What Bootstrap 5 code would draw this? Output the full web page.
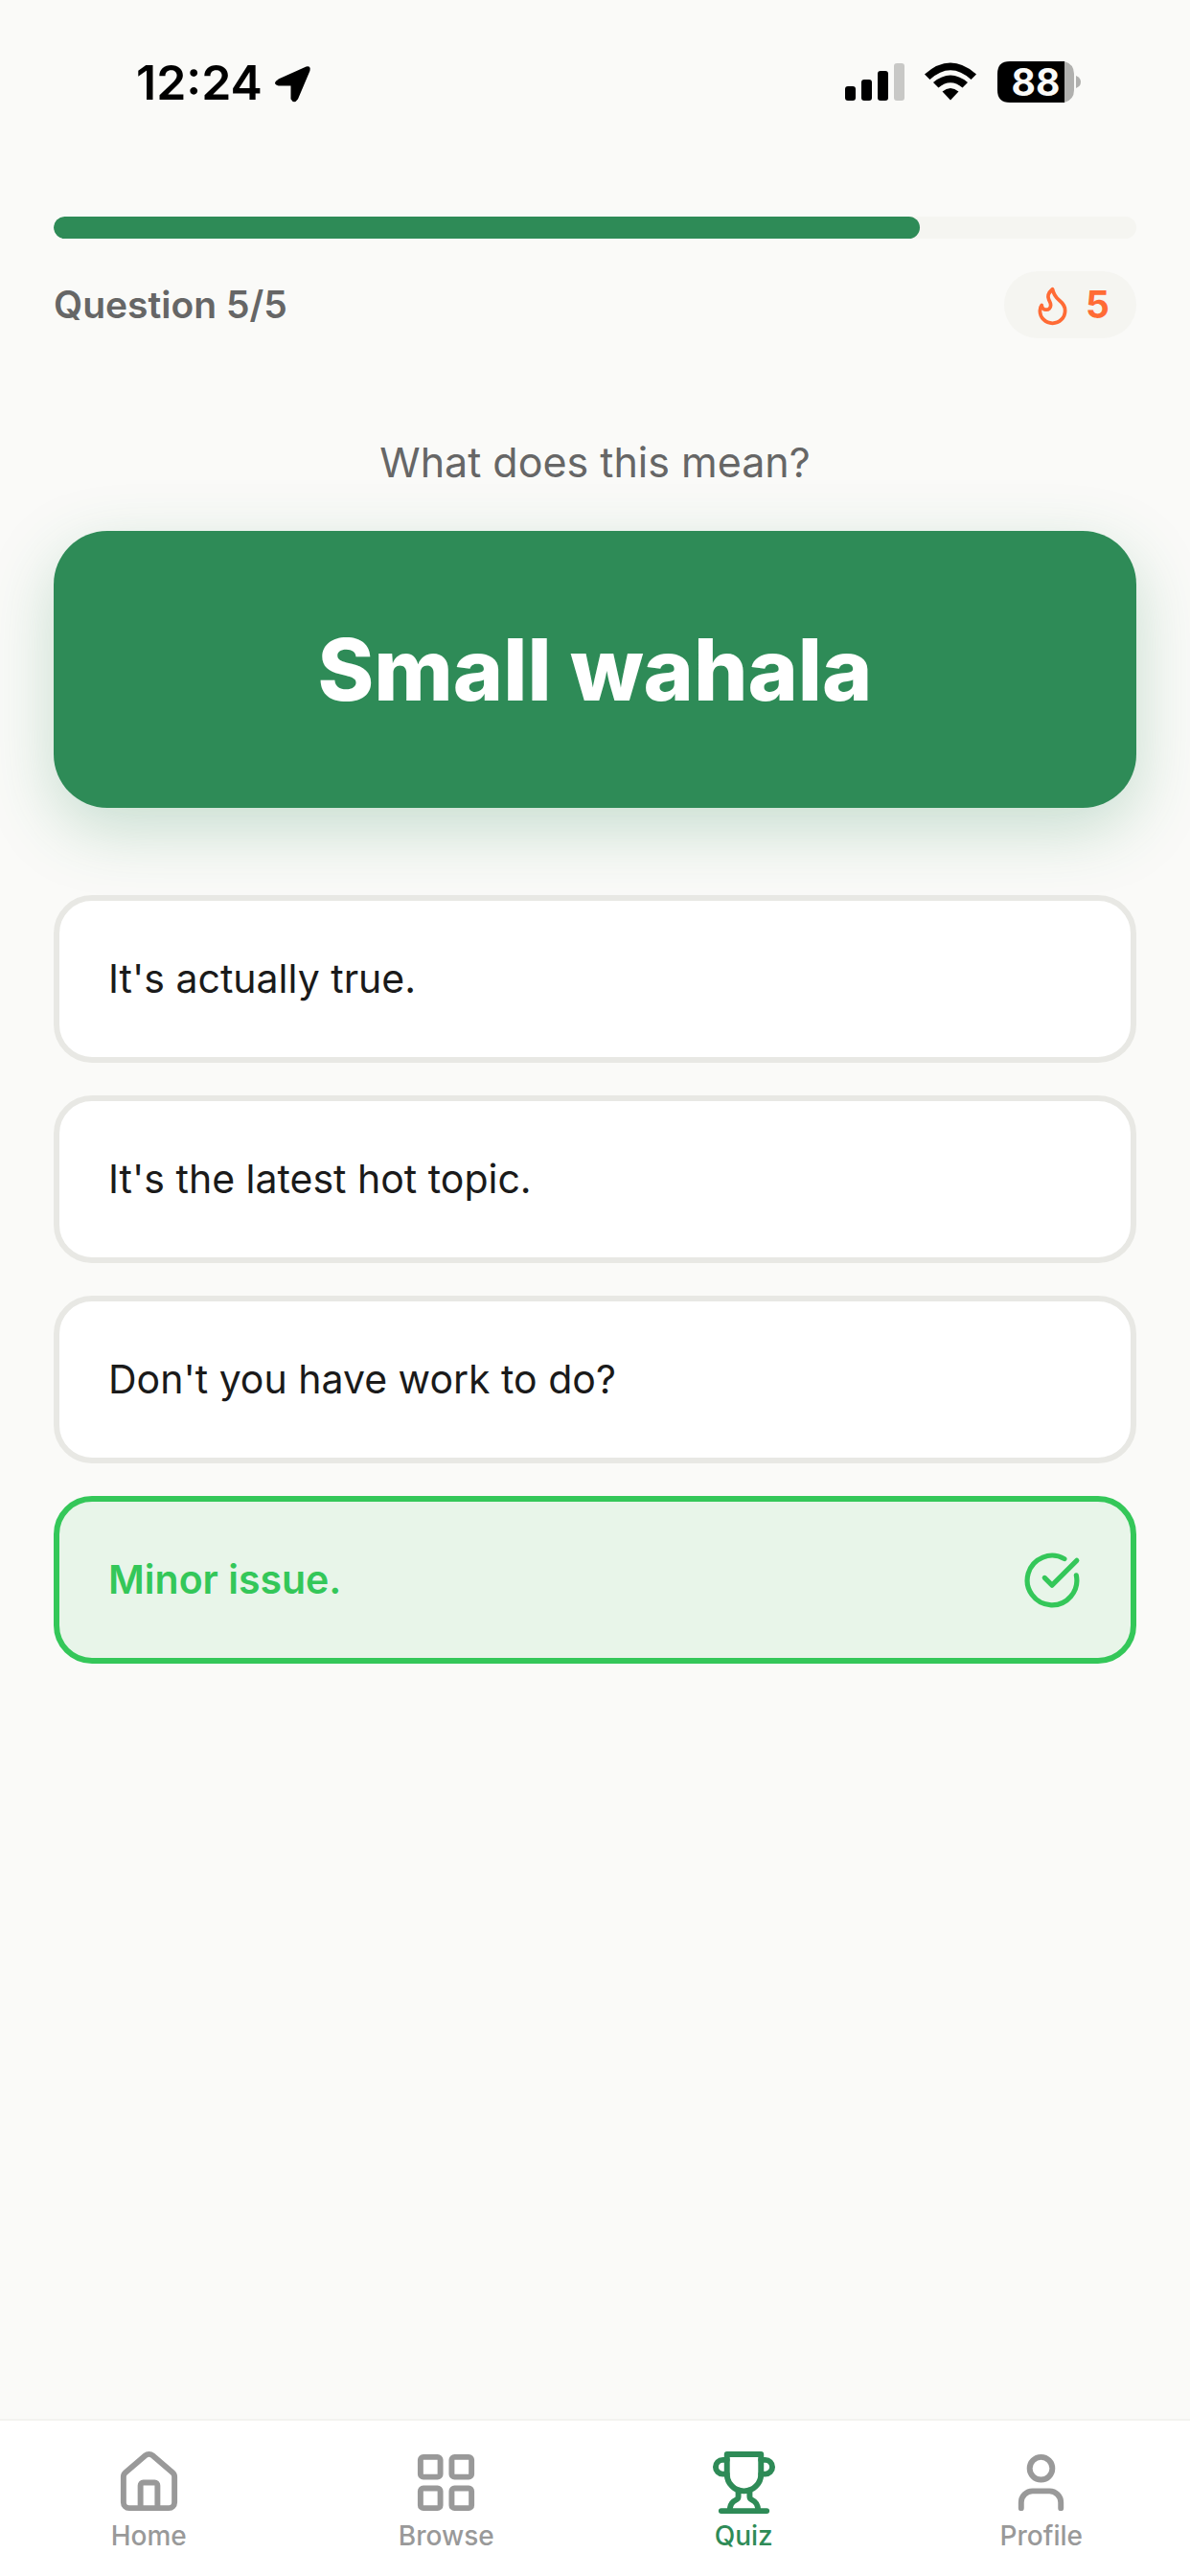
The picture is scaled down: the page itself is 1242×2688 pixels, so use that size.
<!DOCTYPE html>
<html lang="en">
<head>
<meta charset="utf-8">
<meta name="viewport" content="width=device-width, initial-scale=1">
<title>Quiz</title>
<link href="https://cdn.jsdelivr.net/npm/bootstrap@5.3.0/dist/css/bootstrap.min.css" rel="stylesheet">
<style>
  body { background: #fafaf8; color: #1a1a1a; font-family: Inter, "Liberation Sans", sans-serif; }
  .status-bar { height: 226px; padding: 56px 114px 0 142px; color: #000; }
  .status-row { height: 60px; }
  .clock { font-size: 50px; line-height: 60px; font-weight: 600; }
  .status-icons { overflow: visible; }
  .battery-level { font-size: 39px; font-weight: 700; }
  .quiz-body { padding: 0 56px; }
  .quiz-progress { height: 23px; border-radius: 12px; background: #f5f5f1; }
  .quiz-progress .progress-bar { background: #2e8b57; border-radius: 12px; }
  .quiz-meta { margin-top: 34px; height: 70px; font-size: 39px; line-height: 48px; font-weight: 600; color: #666; }
  .streak { height: 70px; padding: 0 28px; gap: 12px; border-radius: 35px; background: #f5f5f1; color: #ff6b35; font-weight: 700; }
  .prompt { margin: 101px 0 44px; font-size: 43px; line-height: 56px; color: #666; }
  .phrase { padding: 89px 56px 88px; border-radius: 56px; background: #2e8b57; color: #fff; font-size: 89px; line-height: 112px; font-weight: 800; box-shadow: 0 22px 68px rgba(46, 139, 87, .25); }
  .answers { margin-top: 91px; gap: 34px; }
  .answer { --bs-btn-color: #1a1a1a; --bs-btn-bg: #fff; --bs-btn-border-color: #e8e8e4; --bs-btn-border-width: 6px; --bs-btn-border-radius: 40px; --bs-btn-padding-x: 51px; --bs-btn-padding-y: 50px; --bs-btn-font-size: 41px; --bs-btn-line-height: 63px; }
  .answer-correct { --bs-btn-color: #34c759; --bs-btn-bg: #e8f5e9; --bs-btn-border-color: #34c759; --bs-btn-font-weight: 600; }
  .tab-bar { height: 164px; background: #fff; border-top: 2px solid #f3f3f0; padding-top: 29px; }
  .tab-bar .nav-link { padding: 0; gap: 2px; color: #999; font-size: 28px; line-height: 36px; font-weight: 500; }
  .tab-bar .nav-link.active { color: #2e8b57; }
  .line-icon { fill: none; stroke: currentColor; stroke-width: 2; stroke-linecap: round; stroke-linejoin: round; flex: none; }
</style>
</head>
<body class="min-vh-100 d-flex flex-column">
<header class="status-bar">
  <div class="status-row d-flex align-items-center justify-content-between">
    <div class="d-flex align-items-center gap-2">
      <span class="clock">12:24</span>
      <svg width="46" height="42" viewBox="-3 0 46 42" aria-hidden="true"><path d="M6 18.500L35 5.500Q38.500 4.500 37.500 8.500L25 38Q22 42.500 19.500 38V23.500H6Q0 22 6 18.500Z" stroke="#000" stroke-width="2" stroke-linejoin="round"/></svg>
    </div>
    <svg class="status-icons" width="246" height="44" viewBox="0 0 246 44" role="img" aria-label="Signal, Wi-Fi, battery 88">
      <rect x="0" y="26" width="11" height="15" rx="3"/>
      <rect x="17" y="19" width="11" height="22" rx="3"/>
      <rect x="34" y="10" width="11" height="31" rx="3"/>
      <rect x="51" y="2" width="11" height="39" rx="3" fill="#c8c8c6"/>
      <path d="M83 13.500Q110 -10.500 137 13.500L131.500 19Q110 -.5 88.500 19Z"/>
      <path d="M92 22Q110 7 128 22L122.500 27.500Q110 17 97.500 27.500Z"/>
      <path d="M101.500 31.500Q110 24.500 118.500 31.500L110 40.500Z"/>
      <path d="M172 0H229V43H172Q159 43 159 30V13Q159 0 172 0Z"/>
      <path d="M229 0Q239 3 239 13V30Q239 40 229 43Z" fill="#b0b0ae"/>
      <path d="M241 15Q246 17 246 21.500Q246 26 241 28Z" fill="#b0b0ae"/>
      <text class="battery-level" x="199" y="36" text-anchor="middle" fill="#fafaf8">88</text>
    </svg>
  </div>
</header>

<main class="quiz-body flex-grow-1">
  <div class="progress quiz-progress" role="progressbar" aria-label="Quiz progress" aria-valuenow="80" aria-valuemin="0" aria-valuemax="100">
    <div class="progress-bar" style="width: 80%"></div>
  </div>
  <div class="quiz-meta d-flex align-items-center justify-content-between">
    <span>Question 5/5</span>
    <span class="streak d-flex align-items-center">
      <svg class="line-icon" width="45" height="45" viewBox="0 0 24 24" aria-hidden="true"><path d="M8.500 14.500A2.500 2.500 0 0 0 11 12c0-1.380-.5-2-1-3-1.072-2.143-.224-4.054 2-6 .5 2.500 2 4.900 4 6.500 2 1.600 3 3.500 3 5.500a7 7 0 1 1-14 0c0-1.153.433-2.294 1-3a2.500 2.500 0 0 0 2.500 2.500z"/></svg>
      <span>5</span>
    </span>
  </div>

  <p class="prompt text-center">What does this mean?</p>
  <h1 class="phrase text-center mb-0">Small wahala</h1>

  <div class="answers d-grid">
    <button type="button" class="btn answer text-start">It's actually true.</button>
    <button type="button" class="btn answer text-start">It's the latest hot topic.</button>
    <button type="button" class="btn answer text-start">Don't you have work to do?</button>
    <button type="button" class="btn answer answer-correct d-flex align-items-center justify-content-between">
      <span>Minor issue.</span>
      <svg class="line-icon" width="62" height="62" viewBox="0 0 24 24" aria-hidden="true"><path d="M21.801 10A10 10 0 1 1 17 3.335"/><path d="m9 11 3 3L22 4"/></svg>
    </button>
  </div>
</main>

<nav class="tab-bar" aria-label="Main">
  <div class="d-flex">
    <a class="nav-link w-25 d-flex flex-column align-items-center" href="#home">
      <svg class="line-icon" width="71" height="71" viewBox="0 0 24 24" aria-hidden="true"><path d="M15 21v-8a1 1 0 0 0-1-1h-4a1 1 0 0 0-1 1v8"/><path d="M3 10a2 2 0 0 1 .709-1.528l7-5.999a2 2 0 0 1 2.582 0l7 5.999A2 2 0 0 1 21 10v9a2 2 0 0 1-2 2H5a2 2 0 0 1-2-2z"/></svg>
      <span>Home</span>
    </a>
    <a class="nav-link w-25 d-flex flex-column align-items-center" href="#browse">
      <svg class="line-icon" width="71" height="71" viewBox="0 0 24 24" aria-hidden="true"><rect x="3" y="3" width="7" height="7" rx="1"/><rect x="14" y="3" width="7" height="7" rx="1"/><rect x="14" y="14" width="7" height="7" rx="1"/><rect x="3" y="14" width="7" height="7" rx="1"/></svg>
      <span>Browse</span>
    </a>
    <a class="nav-link active w-25 d-flex flex-column align-items-center" href="#quiz" aria-current="page">
      <svg class="line-icon" width="71" height="71" viewBox="0 0 24 24" aria-hidden="true"><path d="M6 9H4.500a2.500 2.500 0 0 1 0-5H6"/><path d="M18 9h1.500a2.500 2.500 0 0 0 0-5H18"/><path d="M4 22h16"/><path d="M10 14.660V17c0 .55-.47.98-.97 1.210C7.850 18.750 7 20.240 7 22"/><path d="M14 14.660V17c0 .55.47.98.97 1.210C16.150 18.750 17 20.240 17 22"/><path d="M18 2H6v7a6 6 0 0 0 12 0V2Z"/></svg>
      <span>Quiz</span>
    </a>
    <a class="nav-link w-25 d-flex flex-column align-items-center" href="#profile">
      <svg class="line-icon" width="71" height="71" viewBox="0 0 24 24" aria-hidden="true"><path d="M19 21v-2a4 4 0 0 0-4-4H9a4 4 0 0 0-4 4v2"/><circle cx="12" cy="7" r="4"/></svg>
      <span>Profile</span>
    </a>
  </div>
</nav>
<script src="https://cdn.jsdelivr.net/npm/bootstrap@5.3.0/dist/js/bootstrap.bundle.min.js"></script>
</body>
</html>
